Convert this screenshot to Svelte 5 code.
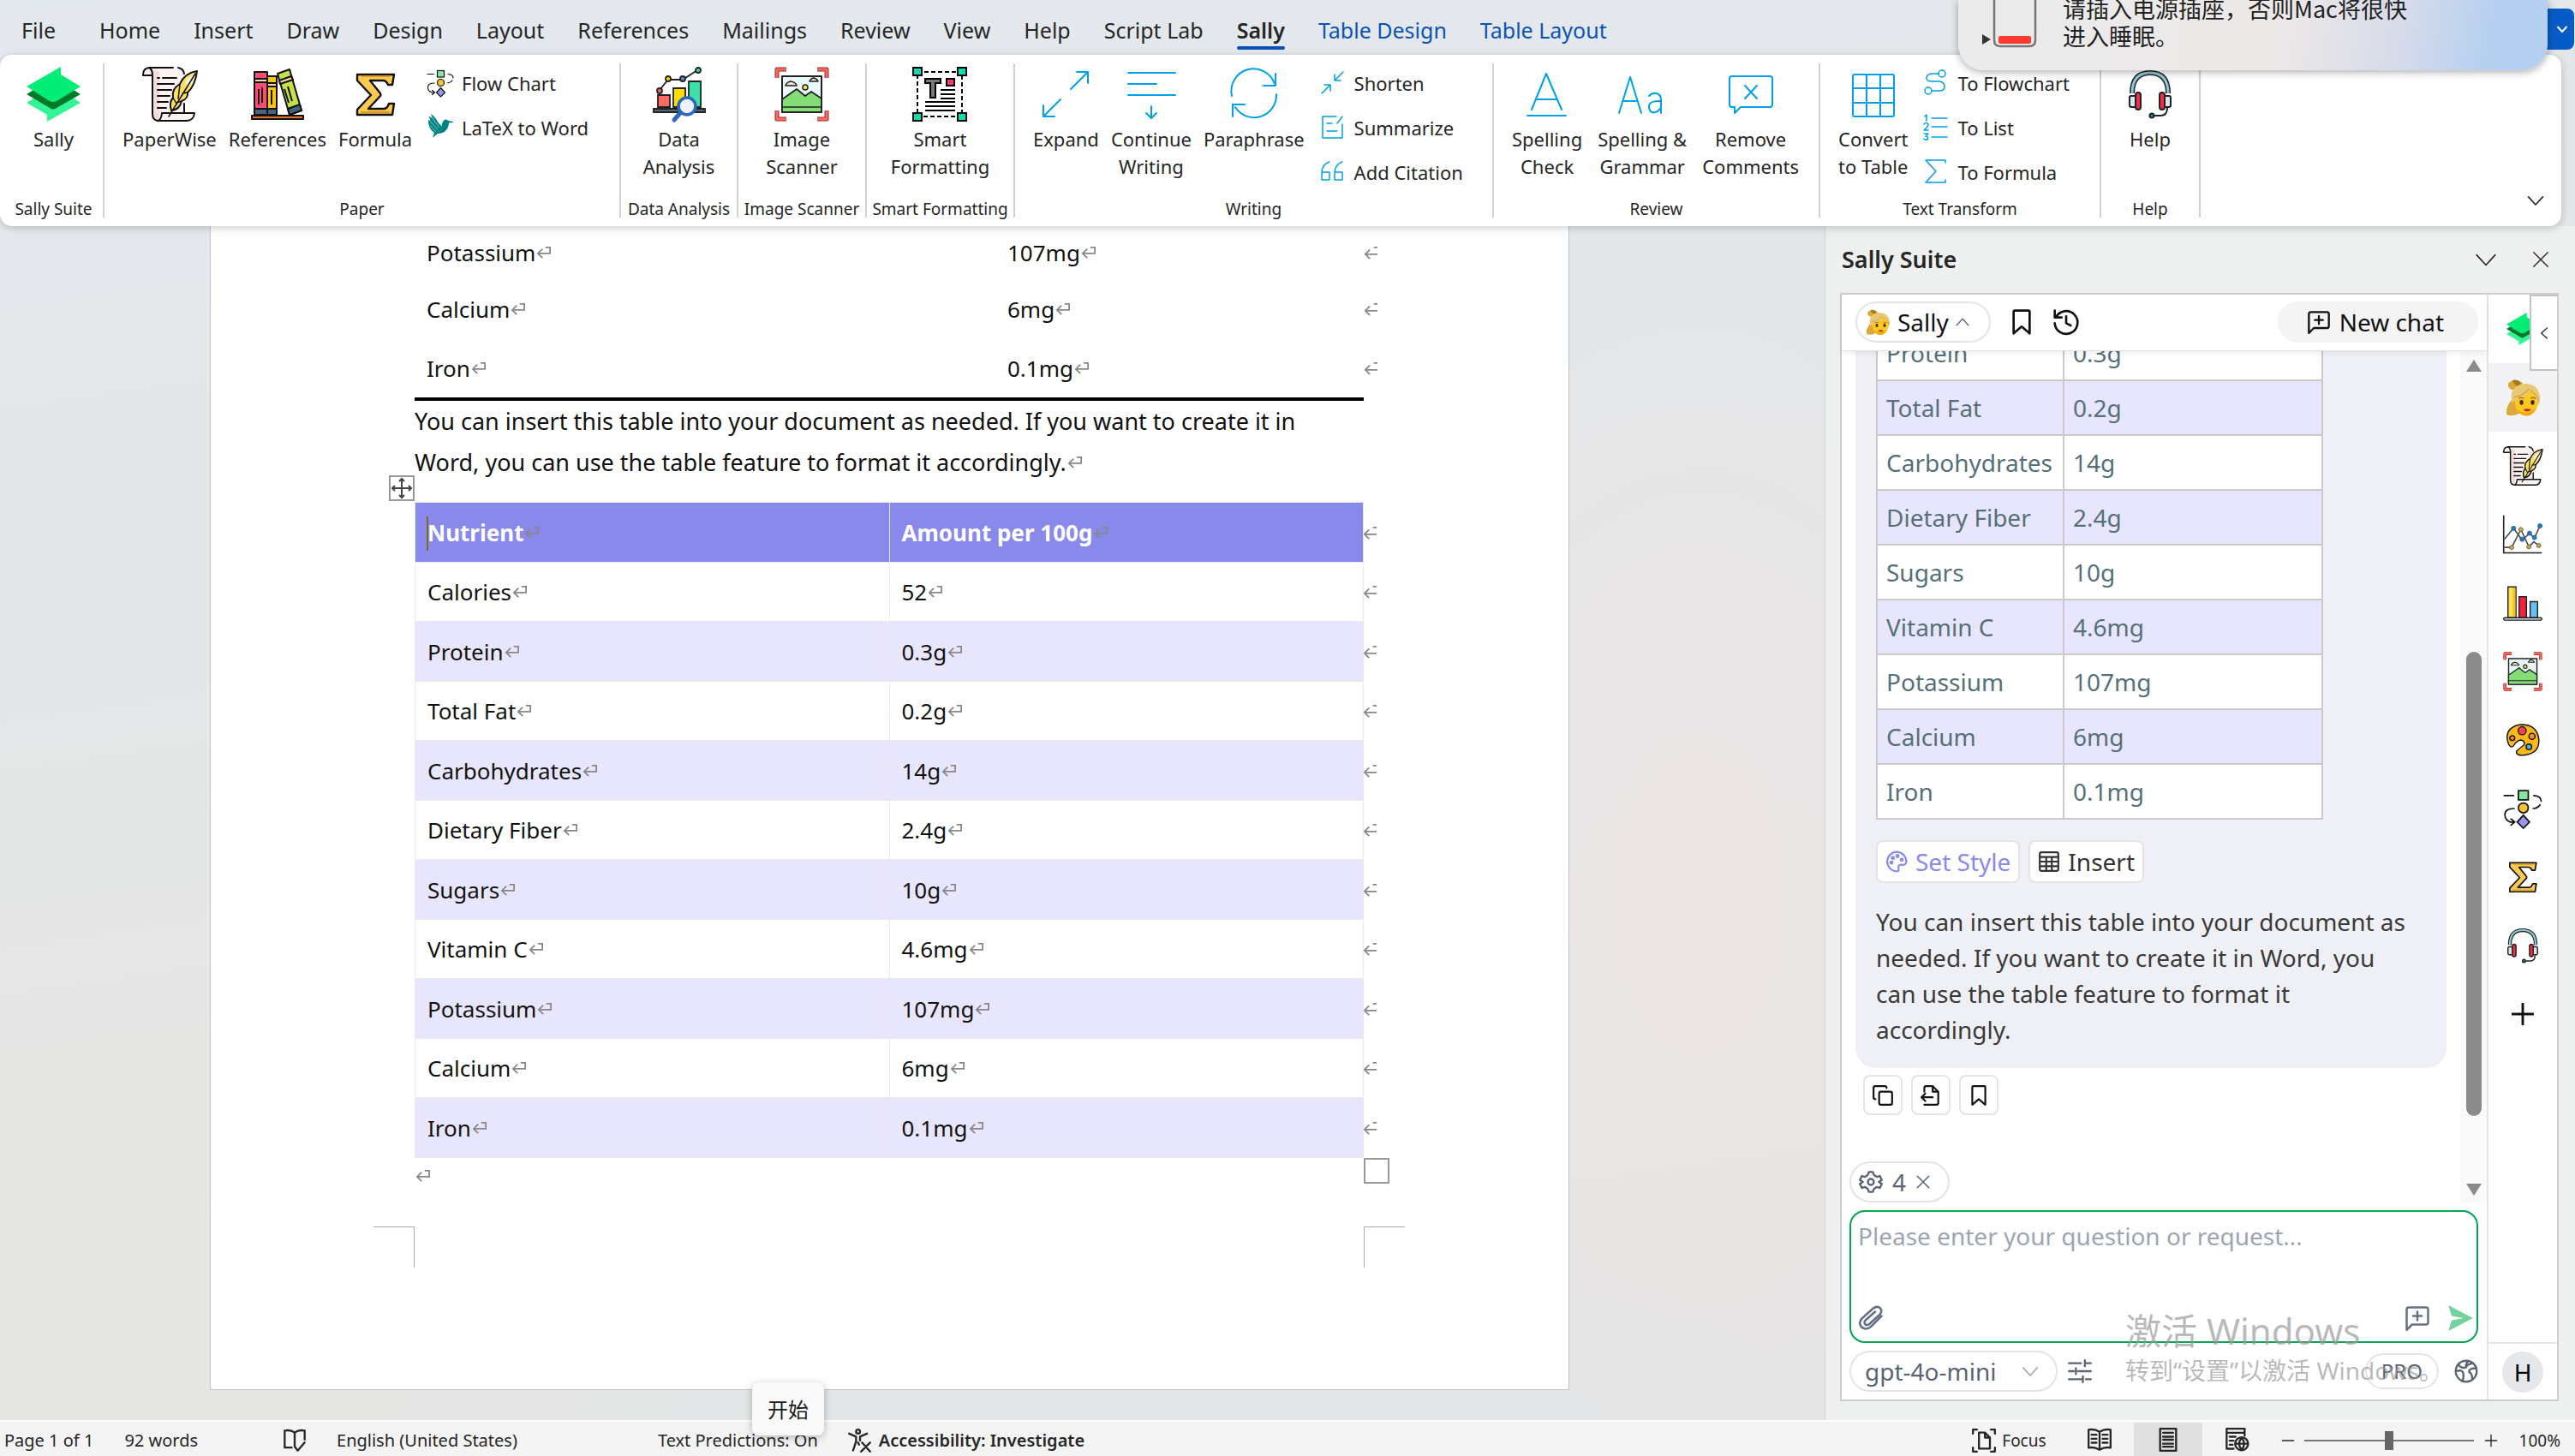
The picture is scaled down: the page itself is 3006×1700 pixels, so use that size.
<script>
  const tabs = [
    { label: 'File', kind: 'file' }, { label: 'Home' }, { label: 'Insert' }, { label: 'Draw' }, { label: 'Design' },
    { label: 'Layout' }, { label: 'References' }, { label: 'Mailings' }, { label: 'Review' }, { label: 'View' },
    { label: 'Help' }, { label: 'Script Lab' }, { label: 'Sally', kind: 'active' },
    { label: 'Table Design', kind: 'context' }, { label: 'Table Layout', kind: 'context' }
  ];

  const groups = [
    { name: 'Sally Suite', width: 117, big: [['logo', 'Sally']] },
    { name: 'Paper', width: 603, big: [['scroll', 'PaperWise'], ['books', 'References'], ['sigma', 'Formula']], small: [['flow', 'Flow Chart'], ['bird', 'LaTeX to Word']] },
    { name: 'Data Analysis', width: 137, big: [['analysis', 'Data', 'Analysis']] },
    { name: 'Image Scanner', width: 150, big: [['image', 'Image', 'Scanner']] },
    { name: 'Smart Formatting', width: 173, big: [['format', 'Smart', 'Formatting']] },
    { name: 'Writing', width: 559, big: [['expand', 'Expand'], ['continue', 'Continue', 'Writing'], ['paraphrase', 'Paraphrase']], small: [['shorten', 'Shorten'], ['summarize', 'Summarize'], ['quote', 'Add Citation']] },
    { name: 'Review', width: 381, roomy: true, big: [['spellA', 'Spelling', 'Check'], ['spellAa', 'Spelling &', 'Grammar'], ['removeComment', 'Remove', 'Comments']] },
    { name: 'Text Transform', width: 328, big: [['grid', 'Convert', 'to Table']], small: [['toFlow', 'To Flowchart'], ['toList', 'To List'], ['toSigma', 'To Formula']] },
    { name: 'Help', width: 116, big: [['headset', 'Help']] }
  ];

  const upperRows = [['Potassium', '107mg'], ['Calcium', '6mg'], ['Iron', '0.1mg']];
  const nutrients = [
    ['Calories', '52'], ['Protein', '0.3g'], ['Total Fat', '0.2g'], ['Carbohydrates', '14g'], ['Dietary Fiber', '2.4g'],
    ['Sugars', '10g'], ['Vitamin C', '4.6mg'], ['Potassium', '107mg'], ['Calcium', '6mg'], ['Iron', '0.1mg']
  ];
  const rail = [
    ['logo', 'Sally Suite'], ['girl', 'Sally'], ['scroll', 'PaperWise'], ['lines', 'Data analysis'], ['bars', 'Charts'],
    ['image', 'Image scanner'], ['palette', 'Drawing'], ['flow', 'Flow chart'], ['sigma', 'Formula'], ['headset', 'Help'], ['plus', 'Add']
  ];
  let zoom = $state(50);
</script>

{#snippet icon(name)}
  {#if name === 'logo'}
    <svg viewBox="0 0 64 64" aria-hidden="true">
      <path fill="#32f596" d="M0 42 10 36H54L63 42 24 64V56Z" />
      <path fill="#007a2a" d="M0 32 10 26H53L63 32 35 48Q31 51 27 48Z" />
      <path fill="#00ee76" d="M40 0V9L63 23 35 40Q31 42 27 40L0 23Z" />
    </svg>
  {:else if name === 'scroll'}
    <svg viewBox="0 0 64 64" fill="none" stroke="#111" stroke-width="2" stroke-linecap="round" stroke-linejoin="round" aria-hidden="true">
      <path fill="#fbf3f1" stroke="none" d="M8 2H44Q49 2 49 9V54H61Q62 62 55 63H18Q12 61 12 54V10H1Q1 3 8 2Z" />
      <path fill="#f1dedb" stroke="none" d="M12 5H20V62Q12 61 12 54Z" />
      <path d="M36 1H8Q1 2 1 9V10H12V55Q12 62 18 63H52Q60 63 61 54H23Q22 63 18 63M8 1Q12 3 12 10M42 1Q48 2 49 8M49 43V54" />
      <path d="M18 13H20M24 13H40M18 20H37M18 27H34M18 34H32M18 41H30M18 48H28" />
      <path fill="#fbe15f" d="M64 5Q50 7 44 20Q34 26 36 36Q31 42 34 51Q44 50 46 40Q54 37 53 30Q62 22 64 5Z" />
      <path fill="#fdf3dc" stroke="none" d="M62 8Q54 11 50 18L54 24Q60 19 62 8Z" />
      <path stroke-width="1.5" d="M62 8 31 58M44 21 42 37M36 36 40 43M53 30 47 31M46 40 40 42" />
    </svg>
  {:else if name === 'books'}
    <svg viewBox="0 0 64 64" stroke="#111" stroke-width="2" stroke-linejoin="round" aria-hidden="true">
      <path fill="#ff4d75" d="M5 6H20V56H5Z" /><path fill="#f9dfa5" d="M5 14H20V18H5Z" /><path fill="#44657f" d="M5 49H20V56H5Z" />
      <path fill="#ffc508" d="M20 11H31V56H20Z" /><path fill="#f9dfa5" d="M20 19H31V23H20Z" /><path fill="#44657f" d="M20 49H31V56H20Z" />
      <path fill="#c4e14a" d="M32 8 46 3 60 51 46 56Z" /><path fill="#f9dfa5" d="M34 16 48 11 50 15 35 20Z" /><path fill="#44657f" d="M44 49 58 44 60 51 46 56Z" />
      <path d="M10 26V44M14 24V42M25 27V44M40 26 45 42M44 23 49 40" />
      <path fill="#e5702f" d="M2 57H62V61H2Z" />
    </svg>
  {:else if name === 'sigma'}
    <svg viewBox="0 0 64 64" aria-hidden="true">
      <path fill="#fdca50" stroke="#111" stroke-width="2.4" stroke-linejoin="round" d="M11 9H54L52 21H47Q45 16 41 16H26L38 31Q39 33 38 34L24 49H42Q46 49 48 43H54L52 56H11V50L27 33 11 16Z" />
      <path stroke="#d99a28" stroke-width="2" d="M15 53H49M16 11H50" />
    </svg>
  {:else if name === 'flow'}
    <svg viewBox="0 0 64 64" fill="none" stroke="#111" stroke-width="2.4" stroke-linecap="round" aria-hidden="true">
      <path d="M2 11H17M50 11Q62 12 62 20M60 26Q57 31 49 32M18 32Q3 32 3 42Q3 51 12 54H18M13 49 19 54 13 59" />
      <rect x="25" y="3" width="16" height="15" fill="#86e8a0" /><circle cx="33" cy="31" r="8" fill="#fcc42d" /><path fill="#9896ee" d="M33 43 43 54 33 64 23 54Z" />
    </svg>
  {:else if name === 'bird'}
    <svg viewBox="0 0 64 64" aria-hidden="true">
      <path fill="#008584" d="M10 0Q20 6 27 20L35 29Q36 17 43 13Q49 12 51 16L62 18V20L52 21Q52 32 43 41Q35 46 26 46L14 56 18 44Q3 34 4 14L9 16 5 5 13 10Z" />
      <path stroke="#fff" stroke-width="1" fill="none" d="M8 17 26 37M12 7 29 32M8 27 22 42" />
    </svg>
  {:else if name === 'analysis'}
    <svg viewBox="0 0 64 64" stroke="#222" stroke-width="1.8" stroke-linecap="round" aria-hidden="true">
      <path fill="none" d="M9 27 19 15H36L53 4" />
      <circle cx="9" cy="28" r="3" fill="#fc6b62" /><circle cx="19" cy="14" r="3" fill="#ffd500" /><circle cx="36" cy="14" r="3" fill="#4f8ee8" /><circle cx="54" cy="4" r="3" fill="#36dfa4" />
      <path fill="#fc6b62" d="M7 33H21V47H7Z" /><path fill="#ffdd00" d="M25 25H39V47H25Z" /><path fill="#3be2aa" d="M43 17H57V47H43Z" />
      <path fill="#556677" d="M2 49H62V53H2Z" /><path stroke="#2b67bb" stroke-width="5" d="M33 54 26 62" />
      <circle cx="41" cy="46" r="10" fill="#eef1f8" stroke="#2b67bb" stroke-width="3.5" />
    </svg>
  {:else if name === 'image'}
    <svg viewBox="0 0 64 64" stroke-linejoin="round" aria-hidden="true">
      <rect x="9" y="11" width="46" height="42" fill="#e8f8fd" stroke="#222" stroke-width="2" />
      <path fill="#85dd78" stroke="#222" stroke-width="1.8" d="M9 38 26 26 36 34 43 29 55 37V53H9Z" /><path stroke="#222" stroke-width="1.5" d="M9 47H55" />
      <circle cx="36" cy="24" r="3" fill="#ffe35a" stroke="#222" stroke-width="1.5" />
      <path fill="#f9dfc5" stroke="#222" stroke-width="1.5" d="M13 22Q14 18 19 17Q25 18 26 22ZM41 17Q43 13 46 13Q50 14 51 17Z" />
      <path fill="none" stroke="#8c2f2c" stroke-width="5" d="M3 13V3H14M50 3H61V13M3 51V61H14M50 61H61V51" /><path fill="none" stroke="#fb6a61" stroke-width="3" d="M3 13V3H14M50 3H61V13M3 51V61H14M50 61H61V51" />
    </svg>
  {:else if name === 'format'}
    <svg viewBox="0 0 64 64" stroke="#000" stroke-width="2" aria-hidden="true">
      <path fill="none" stroke-dasharray="5 3" d="M6 6H58V58H6Z" />
      <g fill="#08ddb0"><rect x="1" y="1" width="10" height="9" /><rect x="53" y="1" width="10" height="9" /><rect x="1" y="54" width="10" height="9" /><rect x="53" y="54" width="10" height="9" /></g>
      <path fill="#777" d="M15 14H33V19H27V36H21V19H15Z" /><path fill="#ff3b6c" d="M40 14H49V22H40Z" />
      <path d="M33 27H50M33 32H50M33 37H50M15 41H50M15 46H50M15 51H50" />
    </svg>
  {:else if name === 'expand'}
    <svg class="blue" viewBox="0 0 64 64" aria-hidden="true"><path d="M38 26 58 6M45 6H58V19M26 38 6 58M6 45V58H19" /></svg>
  {:else if name === 'continue'}
    <svg class="blue" viewBox="0 0 64 64" aria-hidden="true"><path d="M5 7H60M5 20H38M5 33H60M32 46V59M26 54 32 60 38 54" /></svg>
  {:else if name === 'paraphrase'}
    <svg class="blue" viewBox="0 0 64 64" aria-hidden="true"><path d="M6 34A26 26 0 0 1 56 20M57 8V22H43M58 32A26 26 0 0 1 10 47M7 58V44H21" /></svg>
  {:else if name === 'shorten'}
    <svg class="blue fine" viewBox="0 0 32 32" aria-hidden="true"><path d="M28 3 18 13M18 6V13H25M3 28 13 18M6 18H13V25" /></svg>
  {:else if name === 'summarize'}
    <svg class="blue fine" viewBox="0 0 32 32" aria-hidden="true"><path d="M20 3H4V28H27V12M9 11H15M9 20H21M27 3 21 11" /></svg>
  {:else if name === 'quote'}
    <svg class="blue fine" viewBox="0 0 32 32" aria-hidden="true"><path d="M12 4Q3 7 3 17V25H12V16H3M27 4Q18 7 18 17V25H27V16H18" /></svg>
  {:else if name === 'spellA'}
    <svg class="blue" viewBox="0 0 64 64" aria-hidden="true"><path d="M14 50 31 8 49 50M20 38H43M9 57H54" /></svg>
  {:else if name === 'spellAa'}
    <svg class="blue" viewBox="0 0 64 64" aria-hidden="true"><path d="M5 54 18 12 31 54M9 40H27M40 34Q44 30 49 31Q54 33 54 38V54M54 40Q39 39 40 48Q42 56 50 52L54 48" /></svg>
  {:else if name === 'removeComment'}
    <svg class="blue" viewBox="0 0 64 64" aria-hidden="true"><path d="M10 11H54Q57 11 57 14V44Q57 47 54 47H20L13 54V47H10Q7 47 7 44V14Q7 11 10 11ZM25 22 39 37M39 22 25 37" /></svg>
  {:else if name === 'grid'}
    <svg class="blue" viewBox="0 0 64 64" aria-hidden="true"><rect x="8" y="9" width="48" height="49" rx="2" /><path d="M24 9V58M40 9V58M8 25H56M8 42H56" /></svg>
  {:else if name === 'toFlow'}
    <svg class="blue fine" viewBox="0 0 32 32" aria-hidden="true"><circle cx="23" cy="5" r="4" /><circle cx="7" cy="25" r="4" /><path d="M19 5H11Q5 6 5 10Q5 14 11 14H20Q26 15 26 20Q26 25 20 25H11" /></svg>
  {:else if name === 'toList'}
    <svg class="blue fine" viewBox="0 0 32 32" aria-hidden="true"><path d="M11 5H29M11 15H29M11 27H29M3 3 5 1V8M2 12Q5 9 7 12Q7 15 2 19H7M2 23H7L4 26Q8 27 6 30Q4 31 2 29" /></svg>
  {:else if name === 'toSigma'}
    <svg class="blue fine" viewBox="0 0 32 32" aria-hidden="true"><path d="M27 5V2H4L16 15 4 28H27V25" /></svg>
  {:else if name === 'headset'}
    <svg viewBox="0 0 64 64" stroke="#222" stroke-width="2" aria-hidden="true">
      <path fill="none" stroke-width="6" d="M11 31Q11 7 32 7Q53 7 53 31" /><path fill="none" stroke="#8fc7d6" stroke-width="3" d="M11 31Q11 7 32 7Q53 7 53 31" />
      <rect x="8" y="34" width="9" height="13" rx="2" fill="#dbe7f1" /><rect x="47" y="34" width="9" height="13" rx="2" fill="#dbe7f1" />
      <rect x="15" y="30" width="6" height="20" rx="3" fill="#f12e43" /><rect x="43" y="30" width="6" height="20" rx="3" fill="#f12e43" />
      <path fill="none" d="M52 48Q52 57 44 57H37" /><circle cx="34" cy="57" r="2.5" fill="#2b7db2" />
    </svg>
  {:else if name === 'girl'}
    <svg viewBox="0 0 64 64" aria-hidden="true">
      <path fill="#dba83c" d="M17 32Q3 48 6 60 18 64 28 57L24 30ZM26 20Q5 22 9 8 22 -1 32 9Z" />
      <path fill="#a5781f" d="M15 4Q24 2 29 9L24 15Q17 9 15 4Z" />
      <ellipse cx="38" cy="39" rx="19" ry="23" fill="#ffc71f" /><path fill="#f3a615" d="M22 50Q28 62 39 62 49 60 54 49 46 57 38 57 28 57 22 50Z" />
      <path fill="#e9ca74" d="M15 42Q8 15 32 10 56 8 60 30 61 40 57 45 56 32 45 22 34 35 20 36Q17 39 15 42Z" /><path fill="none" stroke="#c99c3e" stroke-width="1.5" d="M17 32Q33 30 42 18M44 20Q55 27 58 37" />
      <ellipse cx="30" cy="40" rx="3" ry="4" fill="#3c2d20" /><ellipse cx="48" cy="40" rx="3" ry="4" fill="#3c2d20" />
      <path fill="none" stroke="#a87322" stroke-width="2" d="M25 34Q30 31 34 34M45 34Q49 31 53 34" /><path fill="#b9342f" d="M33 52Q39 49 46 52 39 58 33 52Z" />
    </svg>
  {:else if name === 'lines'}
    <svg viewBox="0 0 64 64" fill="none" stroke="#4b4b4b" stroke-width="2.2" aria-hidden="true">
      <path stroke="#222" d="M1 1V62H63" /><path d="M2 40 17 22 31 41 43 30 51 38 60 18" /><path d="M2 53H14L29 24 42 52 50 44 58 50" />
      <g fill="#1a7fd4" stroke="#274b70" stroke-width="1"><circle cx="17" cy="22" r="3.5" /><circle cx="31" cy="40" r="3.5" /><circle cx="43" cy="30" r="3.5" /><circle cx="51" cy="37" r="3.5" /><circle cx="60" cy="18" r="3.5" /></g>
      <g fill="#c5a646" stroke="#555" stroke-width="1"><circle cx="14" cy="53" r="3.5" /><circle cx="29" cy="24" r="3.5" /><circle cx="42" cy="52" r="3.5" /><circle cx="58" cy="50" r="3.5" /></g>
    </svg>
  {:else if name === 'bars'}
    <svg viewBox="0 0 64 64" stroke="#222" stroke-width="2" aria-hidden="true"><path fill="#ffe052" d="M8 6H21V56H8Z" /><path fill="#f2ba24" stroke="none" d="M16 7H20V55H16Z" /><path fill="#f8203f" d="M26 22H38V56H26Z" /><path fill="#61c3f2" d="M44 30H56V56H44Z" /><rect x="1" y="56" width="62" height="4" rx="2" fill="#d9e2ec" /></svg>
  {:else if name === 'palette'}
    <svg viewBox="0 0 64 64" stroke="#111" stroke-width="2" aria-hidden="true">
      <path fill="#ffb914" d="M32 7Q55 8 58 30 60 52 38 56 20 59 22 50 30 43 34 40 37 34 29 32 22 33 18 40 14 47 9 39 1 17 20 9 26 7 32 7Z" />
      <circle cx="31" cy="17" r="6.500" fill="#ff424b" /><circle cx="47" cy="26" r="5" fill="#ff8b35" /><circle cx="15" cy="29" r="4" fill="#ff8b35" /><circle cx="42" cy="43" r="4.500" fill="#43b9e2" />
    </svg>
  {:else if name === 'plus'}
    <svg viewBox="0 0 64 64" stroke="#111" stroke-width="4" aria-hidden="true"><path d="M32 14V50M14 32H50" /></svg>
  {/if}
{/snippet}

{#snippet ret()}
  <svg class="ret" viewBox="0 0 20 18" aria-hidden="true"><path d="M12 2H18V10H2M8 4 2 10 8 16" /></svg>
{/snippet}

{#snippet rowEnd()}
  <svg class="rowend" viewBox="0 0 20 18" aria-hidden="true"><path d="M13 2H18M18 11H2M8 5 2 11 8 17" /></svg>
{/snippet}

{#snippet chev(dir)}
  <svg class="line" viewBox="0 0 24 24" aria-hidden="true"><path d={{ down: 'M2 7 12 18 22 7', up: 'M3 17 12 7 21 17', left: 'M17 3 7 12 17 21' }[dir]} /></svg>
{/snippet}

{#snippet bookmark()}
  <svg class="line" viewBox="0 0 24 24" aria-hidden="true"><path d="M6 2H18Q19 2 19 3V22L12 16 5 22V3Q5 2 6 2Z" /></svg>
{/snippet}

{#snippet chatPlus()}
  <svg class="line" viewBox="0 0 24 24" aria-hidden="true"><path d="M4 2H20Q22 2 22 4V16Q22 18 20 18H7L2 23V4Q2 2 4 2ZM12 6V14M8 10H16" /></svg>
{/snippet}

<div class="app">
  <nav class="tabs" aria-label="Ribbon tabs">
    {#each tabs as tab}
      <button class="tab {tab.kind ?? ''}">{tab.label}</button>
    {/each}
    <button class="share" aria-label="More sharing options">{@render chev('down')}</button>
  </nav>

  <section class="ribbon" aria-label="Sally">
    {#each groups as group}
      <div class="group" style:min-width="{group.width}px">
        <div class="tools" class:centered={!group.small && group.big.length === 1} class:roomy={group.roomy}>
          {#each group.big as [glyph, first, second]}
            <button class="big">
              {@render icon(glyph)}
              <span>{first}{#if second}<br />{second}{/if}</span>
            </button>
          {/each}
          {#if group.small}
            <div class="stack">
              {#each group.small as [glyph, label]}
                <button class="small">{@render icon(glyph)}<span>{label}</span></button>
              {/each}
            </div>
          {/if}
        </div>
        <span class="caption">{group.name}</span>
      </div>
    {/each}
    <button class="collapse" aria-label="Collapse ribbon">{@render chev('down')}</button>
  </section>

  <main class="workspace">
    <article class="page">
      <table class="plain">
        <tbody>
          {#each upperRows as [name, amount]}
            <tr><td>{name}{@render ret()}</td><td>{amount}{@render ret()}{@render rowEnd()}</td></tr>
          {/each}
        </tbody>
      </table>
      <p>You can insert this table into your document as needed. If you want to create it in<br />Word, you can use the table feature to format it accordingly.{@render ret()}</p>
      <div class="tablewrap">
        <span class="move"><svg viewBox="0 0 26 26" aria-hidden="true"><path d="M13 2V24M2 13H24M10 5 13 2 16 5M10 21 13 24 16 21M5 10 2 13 5 16M21 10 24 13 21 16" /></svg></span>
        <table class="styled">
          <thead>
            <tr><th><i class="caret"></i>Nutrient{@render ret()}</th><th>Amount per 100g{@render ret()}{@render rowEnd()}</th></tr>
          </thead>
          <tbody>
            {#each nutrients as [name, amount]}
              <tr><td>{name}{@render ret()}</td><td>{amount}{@render ret()}{@render rowEnd()}</td></tr>
            {/each}
          </tbody>
        </table>
        <span class="resize"></span>
      </div>
      <div class="endmark">{@render ret()}</div>
      <div class="corners"><i></i><i></i></div>
    </article>

    <aside class="pane">
      <header class="panehead">
        <h2>Sally Suite</h2>
        <button aria-label="Pane options">{@render chev('down')}</button>
        <button aria-label="Close pane"><svg class="line" viewBox="0 0 24 24" aria-hidden="true"><path d="M3 3 21 21M21 3 3 21" /></svg></button>
      </header>
      <div class="addin">
        <div class="chat">
          <div class="chathead">
            <button class="who">{@render icon('girl')}<span>Sally</span>{@render chev('up')}</button>
            <button class="bare" aria-label="Bookmarks">{@render bookmark()}</button>
            <button class="bare" aria-label="History"><svg class="line" viewBox="0 0 24 24" aria-hidden="true"><path d="M3 8A10 10 0 1 1 2 13M2 2V8H8M12 7V13L16 15" /></svg></button>
            <button class="newchat">{@render chatPlus()}<span>New chat</span></button>
          </div>
          <div class="feed">
            <div class="messages">
              <div class="clip">
                <div class="bubble">
                  <table>
                    <tbody>
                      {#each nutrients.slice(1) as [name, amount]}
                        <tr><td>{name}</td><td>{amount}</td></tr>
                      {/each}
                    </tbody>
                  </table>
                  <div class="choices">
                    <button class="style"><svg class="line" viewBox="0 0 24 24" aria-hidden="true"><path d="M12 1.500A10.500 10.500 0 1 0 13 22.500C15 22 14 19 14 17.500S16 15 18 15.500 22.500 15 22.500 12A10.500 10.500 0 0 0 12 1.500Z" /><circle cx="6.500" cy="13" r="1.200" /><circle cx="8" cy="8" r="1.200" /><circle cx="13" cy="6" r="1.200" /><circle cx="17.500" cy="10" r="1.200" /></svg>Set Style</button>
                    <button><svg class="line" viewBox="0 0 24 24" aria-hidden="true"><path d="M4 2H20Q22 2 22 4V20Q22 22 20 22H4Q2 22 2 20V4Q2 2 4 2ZM2 7H22M2 12H22M2 17H22M9 7V22M15 7V22" /></svg>Insert</button>
                  </div>
                  <p>You can insert this table into your document as needed. If you want to create it in Word, you can use the table feature to format it accordingly.</p>
                </div>
                <div class="actions">
                  <button aria-label="Copy"><svg class="line" viewBox="0 0 24 24" aria-hidden="true"><rect x="8" y="8" width="14" height="14" rx="2" /><path d="M4 16Q2 16 2 14V4Q2 2 4 2H14Q16 2 16 4" /></svg></button>
                  <button aria-label="Insert into document"><svg class="line" viewBox="0 0 24 24" aria-hidden="true"><path d="M5 8V4Q5 2 7 2H14L20 8V20Q20 22 18 22H5M14 2V8H20M14 14H2M6 10 2 14 6 18" /></svg></button>
                  <button aria-label="Bookmark">{@render bookmark()}</button>
                </div>
              </div>
              <button class="chip"><svg class="line" viewBox="0 0 24 24" aria-hidden="true"><circle cx="12" cy="12" r="3" /><path d="M10 2H14L15 5 18 7 21 6 23 10 20 12 23 14 21 18 18 17 15 19 14 22H10L9 19 6 17 3 18 1 14 4 12 1 10 3 6 6 7 9 5Z" /></svg>4<svg class="line x" viewBox="0 0 24 24" aria-hidden="true"><path d="M3 3 21 21M21 3 3 21" /></svg></button>
            </div>
            <div class="scroll"><i class="up"></i><i class="thumb"></i><i class="down"></i></div>
          </div>
          <div class="composer">
            <textarea aria-label="Question" placeholder="Please enter your question or request..."></textarea>
            <div class="composebar">
              <button aria-label="Attach"><svg class="line" viewBox="0 0 24 24" aria-hidden="true"><path d="M22 10 12 20Q7 24 3 20 0 16 4 12L14 3Q18 0 21 3 23 6 20 9L10 18Q8 19 7 18 5 16 7 14L16 6" /></svg></button>
              <button class="push" aria-label="Quick prompt">{@render chatPlus()}</button>
              <button aria-label="Send"><svg viewBox="0 0 24 24" aria-hidden="true"><path fill="#73d3a0" d="M1 0 24 12 1 24 4 14 15 12 4 10Z" /></svg></button>
            </div>
          </div>
          <div class="modelbar">
            <label class="model"><select aria-label="Model"><option>gpt-4o-mini</option></select>{@render chev('down')}</label>
            <button class="bare" aria-label="Settings"><svg class="line" viewBox="0 0 24 24" aria-hidden="true"><path d="M1 4H13M17 4H23M17 1V7M1 12H6M10 12H23M8 9V15M1 20H15M18 20H23M15 17V23" /></svg></button>
            <button class="pro">PRO</button>
            <button class="bare" aria-label="Web search"><svg class="line" viewBox="0 0 24 24" aria-hidden="true"><circle cx="12" cy="12" r="10.500" /><path d="M4 5Q7 10 12 8 13 5 19 4M2 12Q8 10 9 14T8 22M22 9Q14 9 15 13 18 14 18 20M12 8Q11 5 14 2" /></svg></button>
          </div>
        </div>
        <div class="rail">
          {#each rail as [glyph, label]}
            <button class:current={glyph === 'girl'} aria-label={label}>{@render icon(glyph)}</button>
          {/each}
          <button class="fold" aria-label="Fold">{@render chev('left')}</button>
          <div class="user"><span>H</span></div>
        </div>
      </div>
    </aside>
  </main>

  <footer class="status">
    <span>Page 1 of 1</span>
    <span class="words">92 words</span>
    <svg class="line proof" viewBox="0 0 24 24" aria-hidden="true"><path d="M12 4Q8 1 2 2V19H9M12 4V18M12 4Q16 1 22 2V11M12 18 15 22 22 14" /></svg>
    <span class="lang">English (United States)</span>
    <span class="predict">Text Predictions: On</span>
    <button class="access"><svg class="line" viewBox="0 0 24 24" aria-hidden="true"><circle cx="10" cy="3" r="2" /><path d="M1 5 8 8V13L5 22M19 5 12 8V12M10 14 11 16M14 14 22 23M22 14 13 23" /></svg>Accessibility: Investigate</button>
    <button class="focus"><svg class="line" viewBox="0 0 24 24" aria-hidden="true"><path d="M5 1H1V5M19 1H23V5M5 23H1V19M19 23H23V19M7 4H13L18 9V20H7ZM13 4V9H18" /></svg>Focus</button>
    <button class="view" aria-label="Read mode"><svg class="line" viewBox="0 0 24 24" aria-hidden="true"><path d="M12 4Q7 1 1 2V20Q7 19 12 22 17 19 23 20V2Q17 1 12 4ZM12 4V22M4 7H9M4 11H9M4 15H9M15 7H20M15 11H20M15 15H20" /></svg></button>
    <button class="view on" aria-label="Print layout"><svg class="line" viewBox="0 0 24 24" aria-hidden="true"><path d="M4 1H20V23H4ZM7 5H17M7 9H17M7 12H17M7 16H17M7 19H17" /></svg></button>
    <button class="view" aria-label="Web layout"><svg class="line" viewBox="0 0 24 24" aria-hidden="true"><path d="M9 21H2V1H20V8M2 5H20M5 9H11M5 13H9M5 17H8" /><circle cx="17" cy="16" r="6.500" /><path d="M11 16H23M17 10Q12 16 17 22Q22 16 17 10" /></svg></button>
    <button class="step" aria-label="Zoom out"><svg class="line" viewBox="0 0 24 24" aria-hidden="true"><path d="M2 12H22" /></svg></button>
    <input type="range" aria-label="Zoom" min="0" max="100" bind:value={zoom} />
    <button class="step" aria-label="Zoom in"><svg class="line" viewBox="0 0 24 24" aria-hidden="true"><path d="M2 12H22M12 2V22" /></svg></button>
    <span class="percent">100%</span>
  </footer>

  <div class="tooltip" role="tooltip">开始</div>
  <div class="watermark"><strong>激活 Windows</strong><span>转到“设置”以激活 Windows。</span></div>
  <div class="notice" role="status">
    <svg viewBox="0 0 64 56" aria-hidden="true"><path fill="#333" d="M0 40 10 46 0 52Z" /><path fill="none" stroke="#777" stroke-width="2.500" d="M14 -4V47Q14 54 21 54H55Q62 54 62 47V-4" /><rect x="19" y="42" width="38" height="9" rx="2" fill="#ff3b2f" /></svg>
    <p>请插入电源插座，否则Mac将很快<br />进入睡眠。</p>
  </div>
</div>

<style>
  :global(body) { margin: 0; background: #e5e8ec; }
  .app {
    position: relative; display: flex; flex-direction: column; height: 100vh; overflow: hidden; color: #262626;
    font: 22px/32px 'Noto Sans', 'Noto Sans CJK SC', sans-serif;
    background:
      radial-gradient(ellipse 420px 700px at 66% 62%, #ede5e6 0, #ede5e600 100%),
      radial-gradient(ellipse 900px 260px at 45% 100%, #e1e7ec 0, #e1e7ec00 100%),
      linear-gradient(172deg, #e4e9ef 0, #e3e7ea 25%, #e6e6e4 62%, #e5e4e4 100%);
  }
  button { font: inherit; color: inherit; background: none; border: 0; padding: 0; margin: 0; display: flex; align-items: center; }
  svg { display: block; flex: none; overflow: visible; }
  .line { fill: none; stroke: currentColor; stroke-width: 2; stroke-linecap: round; stroke-linejoin: round; width: 24px; height: 24px; }
  .blue { fill: none; stroke: #00a0e8; stroke-width: 2; stroke-linecap: round; stroke-linejoin: round; }
  .fine { stroke-width: 1.5; }

  .tabs { display: flex; gap: 1px; height: 64px; padding: 8px 0 0 6px; box-sizing: border-box; font-size: 25px; flex: none; }
  .tab { padding: 4px 19px 0; height: 50px; box-sizing: border-box; position: relative; white-space: nowrap; }
  .file { margin-right: 12px; }
  .active { font-weight: 600; }
  .active::after { content: ''; position: absolute; left: 19px; right: 19px; bottom: 0; height: 4px; border-radius: 2px; background: #0b4fb3; }
  .context { color: #0b53b5; }
  .share { margin: 2px 1px 0 auto; width: 60px; height: 48px; border-radius: 8px; background: #075bc7; color: #fff; justify-content: flex-end; padding-right: 8px; box-sizing: border-box; }
  .share .line { width: 12px; height: 12px; stroke-width: 4; }

  .ribbon { display: flex; position: relative; z-index: 2; flex: none; height: 200px; margin-right: 16px; padding: 10px 0 10px 5px; box-sizing: border-box; background: #fff; border-radius: 14px; box-shadow: 0 2px 10px #0003; }
  .group { display: flex; flex-direction: column; box-sizing: border-box; border-right: 2px solid #d2d2d2; }
  .tools { display: flex; flex: 1; padding: 4px 0 0 14px; }
  .tools.centered { justify-content: center; padding-left: 0; }
  .tools.roomy { padding-left: 12px; }
  .big { flex-direction: column; justify-content: flex-start; padding: 0 7px; text-align: center; white-space: nowrap; }
  .roomy .big { padding: 0 9px; }
  .big svg { width: 64px; height: 64px; margin-bottom: 4px; }
  .stack { display: flex; flex-direction: column; padding: 0 0 0 10px; margin-top: -7px; }
  .small { height: 52px; gap: 9px; white-space: nowrap; }
  .small svg { width: 32px; height: 32px; }
  .caption { text-align: center; font-size: 19px; line-height: 20px; white-space: nowrap; }
  .collapse { margin: auto 20px 10px auto; }
  .collapse .line { width: 20px; height: 20px; }

  .workspace { display: flex; flex: 1; min-height: 0; }
  .page { flex: 1; align-self: flex-start; margin: 0 298px 0 245px; padding: 0 239px 142px 238px; background: #fff; border: 1px solid #c2c5c8; border-top: 0; box-sizing: border-box; color: #111; font-size: 26px; line-height: 36px; }
  .page table { border-collapse: collapse; width: 100%; table-layout: fixed; }
  .page td, .page th { padding: 0 14px; text-align: left; position: relative; }
  .plain { border-bottom: 4px solid #000; }
  .plain td { height: 69px; }
  .plain tr:first-child td { height: 62px; }
  .plain td:first-child { width: 650px; }
  .page p { margin: 0; font-size: 27px; line-height: 48px; white-space: nowrap; }
  .ret, .rowend { display: inline-block; width: 18px; height: 16px; fill: none; stroke: #888; stroke-width: 2; }
  .ret { margin: 0 0 2px 1px; }
  .rowend { position: absolute; right: -18px; top: 50%; margin-top: -8px; }
  .tablewrap { position: relative; margin-top: 22px; }
  .page .styled td, .page .styled th { border: 1px solid #e9e9ee; height: 69px; box-sizing: border-box; }
  .page .styled th, .page .styled tr:nth-child(even) td { height: 70px; }
  .styled th { background: #8988eb; color: #fff; font-weight: 700; }
  .styled tbody tr:nth-child(even) td { background: #e8e6fc; }
  .caret { position: absolute; left: 13px; top: 16px; bottom: 13px; width: 2px; background: #77701c; }
  .move, .resize { position: absolute; width: 26px; height: 26px; border: 2px solid #999; background: #fff; }
  .move { left: -30px; top: -31px; }
  .move svg { fill: none; stroke: #444; stroke-width: 2; }
  .resize { left: 100%; top: 100%; }
  .endmark { height: 80px; line-height: 42px; }
  .corners { display: flex; justify-content: space-between; margin: 0 -48px; }
  .corners i { width: 48px; height: 48px; box-sizing: border-box; border-top: 1px solid #aaa; border-right: 1px solid #aaa; }
  .corners i + i { border-right: 0; border-left: 1px solid #aaa; }

  .pane { display: flex; flex-direction: column; flex: none; width: 876px; box-sizing: border-box; padding: 0 19px 22px 17px; border-left: 1px solid #cfd0d1; background: #eef0f0; }
  .panehead { display: flex; align-items: center; height: 78px; gap: 40px; flex: none; }
  h2 { font-size: 27px; font-weight: 600; margin: 0 auto 0 2px; }
  .panehead .line { width: 26px; height: 26px; stroke-width: 1.5; }
  .panehead button:last-child { margin-right: 10px; }
  .panehead button:last-child .line { width: 22px; }
  .addin { display: flex; flex: 1; min-height: 0; background: #fff; border: 2px solid #cdcdcd; }
  .chat { display: flex; flex-direction: column; flex: 1; min-width: 0; font-size: 28px; line-height: 42px; }
  .chathead { display: flex; align-items: center; flex: none; height: 63px; padding: 0 10px 2px 16px; border-bottom: 1px solid #e2e2e2; box-shadow: 0 3px 6px #0001; gap: 20px; color: #111; z-index: 1; }
  .who { height: 48px; box-sizing: border-box; border: 2px solid #e5e5e5; border-radius: 24px; padding: 0 22px 0 8px; gap: 7px; }
  .who svg:first-child { width: 32px; height: 32px; }
  .who .line { width: 18px; color: #667085; }
  .bare .line { width: 32px; height: 32px; }
  .newchat { margin-left: auto; height: 48px; padding: 0 40px 0 34px; border-radius: 24px; background: #f4f4f5; gap: 10px; }
  .newchat .line { width: 28px; height: 28px; }
  .feed { display: flex; flex: 1; min-height: 0; }
  .messages { display: flex; flex-direction: column; flex: 1; padding-right: 16px; }
  .clip { display: flex; flex-direction: column; justify-content: flex-end; flex: 1; min-height: 0; overflow: hidden; padding: 0 0 54px 16px; }
  .bubble { background: #eff0f5; border-radius: 0 0 24px 24px; padding: 24px 38px 24px 24px; color: #3a3a3a; flex: none; }
  .bubble table { border-collapse: collapse; width: 522px; background: #fff; color: #557079; }
  .bubble td { border: 2px solid #cacaca; height: 64px; padding: 0 10px; box-sizing: border-box; }
  .bubble td:first-child { width: 218px; }
  .bubble tr:nth-child(even) td { background: #e8e6fc; }
  .choices { display: flex; gap: 10px; margin: 24px 0; }
  .choices button { height: 50px; box-sizing: border-box; border: 2px solid #e4e4e6; border-radius: 8px; background: #fff; padding: 0 9px; gap: 9px; color: #333; }
  .choices .line { width: 26px; height: 26px; }
  .choices .style { color: #8988eb; }
  .bubble p { margin: 0; }
  .actions { display: flex; gap: 10px; padding: 8px 9px 0; color: #111; }
  .actions button { width: 46px; height: 47px; justify-content: center; box-sizing: border-box; border: 2px solid #e4e4e6; border-radius: 8px; }
  .actions .line { width: 26px; height: 26px; }
  .chip { align-self: flex-start; height: 48px; box-sizing: border-box; margin-left: 9px; border: 2px solid #e4e4e6; border-radius: 24px; padding: 0 20px 0 9px; gap: 11px; color: #5b6472; flex: none; }
  .chip .line { width: 28px; height: 28px; }
  .chip .x { width: 18px; height: 18px; }
  .scroll { display: flex; flex-direction: column; align-items: center; width: 31px; background: #fafafa; box-sizing: border-box; padding: 10px 0 8px; flex: none; }
  .up, .down { border: 9px solid transparent; }
  .up { border-top: 0; border-bottom: 14px solid #8a8a8a; }
  .down { border-bottom: 0; border-top: 14px solid #8a8a8a; }
  .thumb { width: 18px; height: 542px; border-radius: 9px; background: #8b8b8b; margin: auto 0 79px; }
  .composer { flex: none; margin: 9px 10px 0 9px; border: 2px solid #00a651; border-radius: 18px; height: 155px; box-sizing: border-box; padding: 7px 4px 11px 8px; display: flex; flex-direction: column; }
  textarea { flex: 1; border: 0; padding: 0; resize: none; outline: 0; background: none; font: inherit; }
  textarea::placeholder { color: #9ba5b4; opacity: 1; }
  .composebar { display: flex; gap: 20px; color: #667085; }
  .composebar svg { width: 30px; height: 32px; }
  .push { margin-left: auto; }
  .modelbar { display: flex; align-items: center; flex: none; padding: 9px 10px 9px 9px; gap: 12px; color: #5b6472; }
  .model { display: flex; align-items: center; width: 243px; height: 48px; box-sizing: border-box; border: 2px solid #e4e4e6; border-radius: 24px; padding: 0 20px 0 16px; }
  select { appearance: none; border: 0; background: none; font: inherit; color: inherit; padding: 0; flex: 1; min-width: 0; }
  .model .line { width: 20px; color: #a3a9b5; }
  .modelbar .bare .line { width: 28px; height: 28px; }
  .pro { margin-left: auto; margin-right: 6px; height: 42px; box-sizing: border-box; border: 2px solid #e4e4e6; border-radius: 21px; padding: 0 17px; font-size: 24px; }
  .rail { position: relative; display: flex; flex-direction: column; width: 82px; box-sizing: border-box; border-left: 2px solid #e4e4e4; flex: none; }
  .rail > button { height: 80px; justify-content: center; flex: none; }
  .rail > button svg { width: 46px; height: 46px; }
  .rail > button:first-child svg { width: 38px; height: 38px; }
  .rail .current { background: #f3f3f6; }
  .rail .fold { position: absolute; right: 0; top: 0; width: 32px; height: 89px; box-sizing: border-box; background: #fff; border: 2px solid #c2c2c2; border-width: 2px 0 2px 2px; }
  .rail .fold .line { width: 16px; height: 16px; }
  .user { display: flex; align-items: center; justify-content: center; height: 65px; margin-top: auto; border-top: 2px solid #e4e4e4; color: #000; font-size: 28px; }
  .user span { width: 48px; line-height: 48px; border-radius: 24px; background: #e6e7eb; text-align: center; }

  .status { display: flex; align-items: center; flex: none; height: 42px; box-sizing: border-box; padding: 3px 17px 0 5px; border-top: 2px solid #fff; background: #f4f4f4; font-size: 20px; white-space: nowrap; }
  .words { margin-left: 36px; }
  .proof { width: 28px; height: 28px; margin-left: 99px; }
  .lang { margin-left: 35px; }
  .predict { margin-left: 164px; }
  .access { margin-left: 35px; gap: 8px; font-weight: 600; }
  .access .line, .focus .line, .view .line { width: 28px; height: 28px; }
  .focus { margin-left: auto; gap: 7px; margin-right: 22px; font-size: 19px; }
  .view { width: 80px; height: 40px; justify-content: center; margin-top: -1px; }
  .on { background: #e0e0e0; }
  .step { margin: 0 11px 0 12px; }
  .step .line { width: 16px; height: 16px; }
  .percent { margin-left: 14px; font-size: 19px; }
  input[type='range'] { appearance: none; width: 198px; height: 22px; margin: 0; background: linear-gradient(#777, #777) center / 100% 2px no-repeat; }
  input[type='range']::-webkit-slider-thumb { appearance: none; width: 10px; height: 22px; background: #666; border: 0; }

  .tooltip { position: absolute; left: 878px; bottom: 24px; z-index: 3; padding: 14px 18px; border-radius: 8px; background: #f9f9f9; box-shadow: 0 2px 10px #0004; font: 24px/34px 'Noto Sans CJK SC', sans-serif; color: #1b1b1b; }
  .watermark { position: absolute; right: 144px; bottom: 82px; z-index: 3; display: flex; flex-direction: column; width: 381px; white-space: nowrap; color: #9a9a9ab0; font: 28px/36px 'Noto Sans', 'Noto Sans CJK SC', sans-serif; pointer-events: none; }
  .watermark strong { font-weight: 400; font-size: 42px; line-height: 56px; }
  .notice { position: absolute; right: 32px; top: 0; z-index: 4; display: flex; gap: 30px; width: 688px; height: 82px; box-sizing: border-box; padding-left: 28px; border-radius: 0 0 30px 30px; background: linear-gradient(100deg, #eaebeb 0, #ede8e8 55%, #d5dbea 75%, #b5cff1 90%); box-shadow: 0 2px 10px #0005; color: #222; }
  .notice svg { width: 64px; height: 56px; }
  .notice p { margin: -6px 0 0; font: 27px/32px 'Noto Sans CJK SC', sans-serif; }
</style>
